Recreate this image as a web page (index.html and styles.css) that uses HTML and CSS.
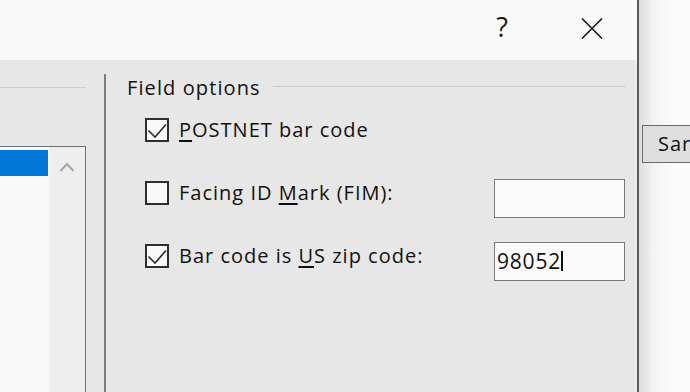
FILE: index.html
```html
<!DOCTYPE html>
<html>
<head>
<meta charset="utf-8">
<link rel="stylesheet" href="styles.css">
</head>
<body>
<div class="screen">
  <div class="dialog">
    <div class="titlebar">
      <span class="help">?</span>
      <svg class="close" width="22" height="21" viewBox="0 0 22 21"><path d="M1 0.5 L21 20.5 M21 0.5 L1 20.5" stroke="#1a1a1a" stroke-width="1.6" fill="none"/></svg>
    </div>
    <div class="body">
      <div class="left-panel">
        <div class="left-rule"></div>
        <div class="listbox">
          <div class="list-items">
            <div class="item-selected"></div>
          </div>
          <div class="scrollbar">
            <svg class="chev" width="16" height="12" viewBox="0 0 16 12"><path d="M1.5 10 L8 3 L14.5 10" stroke="#a8a8a8" stroke-width="2.2" fill="none"/></svg>
          </div>
        </div>
      </div>
      <div class="divider"></div>
      <div class="options">
        <div class="group-head">
          <span class="group-title">Field options</span>
          <span class="group-line"></span>
        </div>
        <div class="rows">
          <div class="row">
            <label class="check">
              <span class="box"><svg width="20" height="20" viewBox="0 0 20 20"><path d="M1.5 10.5 L8 17 L19 4.5" stroke="#2a2a2a" stroke-width="1.6" fill="none"/></svg></span>
              <span class="label"><u>P</u>OSTNET bar code</span>
            </label>
          </div>
          <div class="row">
            <label class="check">
              <span class="box"></span>
              <span class="label">Facing ID <u>M</u>ark (FIM):</span>
            </label>
            <div class="field"></div>
          </div>
          <div class="row">
            <label class="check">
              <span class="box"><svg width="20" height="20" viewBox="0 0 20 20"><path d="M1.5 10.5 L8 17 L19 4.5" stroke="#2a2a2a" stroke-width="1.6" fill="none"/></svg></span>
              <span class="label">Bar code is <u>U</u>S zip code:</span>
            </label>
            <div class="field"><span class="value">98052</span><span class="caret"></span></div>
          </div>
        </div>
      </div>
    </div>
  </div>
  <div class="outside">
    <div class="ext-button">Sar</div>
  </div>
</div>
</body>
</html>
```

FILE: styles.css
```css
html, body {
  margin: 0;
  padding: 0;
}
body {
  width: 690px;
  height: 392px;
  overflow: hidden;
  font-family: "Open Sans", "Noto Sans", sans-serif;
  color: #111111;
}
.screen {
  display: flex;
  width: 690px;
  height: 392px;
}
.dialog {
  width: 637px;
  flex: none;
  display: flex;
  flex-direction: column;
  border-right: 2px solid #5c5c5c;
}
.titlebar {
  height: 60px;
  flex: none;
  background: #f9f9f9;
  display: flex;
  align-items: flex-start;
  justify-content: flex-end;
  padding-right: 34px;
}
.help {
  font-size: 27px;
  line-height: 27px;
  margin-top: 13px;
  margin-right: 73px;
  color: #1a1a1a;
}
.close {
  margin-top: 18px;
}
.body {
  flex: 1;
  display: flex;
  background: #e7e7e7;
  box-shadow: inset -2px 0 0 #eeeeee;
}
.left-panel {
  width: 104px;
  flex: none;
  display: flex;
  flex-direction: column;
}
.left-rule {
  width: 86px;
  height: 1px;
  background: #cdcdcd;
  margin-top: 27px;
}
.listbox {
  margin-top: 58px;
  width: 85px;
  flex: 1;
  border-top: 1px solid #6f6f6f;
  border-right: 1px solid #6f6f6f;
  display: flex;
}
.list-items {
  width: 49px;
  background: #f8f8f8;
  padding-top: 3px;
}
.item-selected {
  width: 48px;
  height: 26px;
  background: #0078d7;
}
.scrollbar {
  flex: 1;
  background: #eeeeee;
  display: flex;
  justify-content: center;
  align-items: flex-start;
}
.chev {
  margin-top: 14px;
}
.divider {
  width: 2px;
  flex: none;
  background: #7d7d7d;
  margin-top: 14px;
}
.options {
  flex: 1;
  padding: 16px 11px 0 21px;
  display: flex;
  flex-direction: column;
}
.group-head {
  display: flex;
  align-items: center;
  height: 24px;
}
.group-title {
  font-size: 20px;
  letter-spacing: 1.1px;
  line-height: 24px;
}
.group-line {
  flex: 1;
  height: 1px;
  background: #cdcdcd;
  margin-left: 12px;
  margin-bottom: 3px;
}
.rows {
  margin-top: -2px;
  padding-left: 18px;
  display: flex;
  flex-direction: column;
}
.row {
  height: 63px;
  display: flex;
  align-items: center;
  justify-content: space-between;
}
.check {
  display: flex;
  align-items: center;
}
.box {
  width: 20px;
  height: 20px;
  border: 2px solid #2e2e2e;
  background: #f9f9f9;
  display: block;
}
.box svg {
  display: block;
}
.label {
  margin-left: 10px;
  font-size: 20px;
  letter-spacing: 1px;
  line-height: 24px;
}
.label u {
  text-underline-offset: 3px;
  text-decoration-thickness: 1.5px;
}
.field {
  width: 127px;
  height: 37px;
  border: 1px solid #7a7a7a;
  background: #fbfbfb;
  margin-top: 11px;
  margin-right: 1px;
  display: flex;
  align-items: center;
  padding-left: 2px;
  box-sizing: content-box;
}
.value {
  font-size: 21px;
  letter-spacing: 0.8px;
  line-height: 24px;
}
.caret {
  width: 1.5px;
  height: 20px;
  background: #111;
  margin-left: 0px;
}
.outside {
  flex: 1;
  background: linear-gradient(to right, #dcdcdc, #f3f3f3 14px, #fafafa 30px);
  padding-top: 125px;
  padding-left: 3px;
  overflow: hidden;
}
.ext-button {
  width: 80px;
  height: 36px;
  border: 1px solid #6a6a6a;
  background: #dedede;
  font-size: 20px;
  letter-spacing: 1px;
  line-height: 36px;
  padding-left: 15px;
}
```
